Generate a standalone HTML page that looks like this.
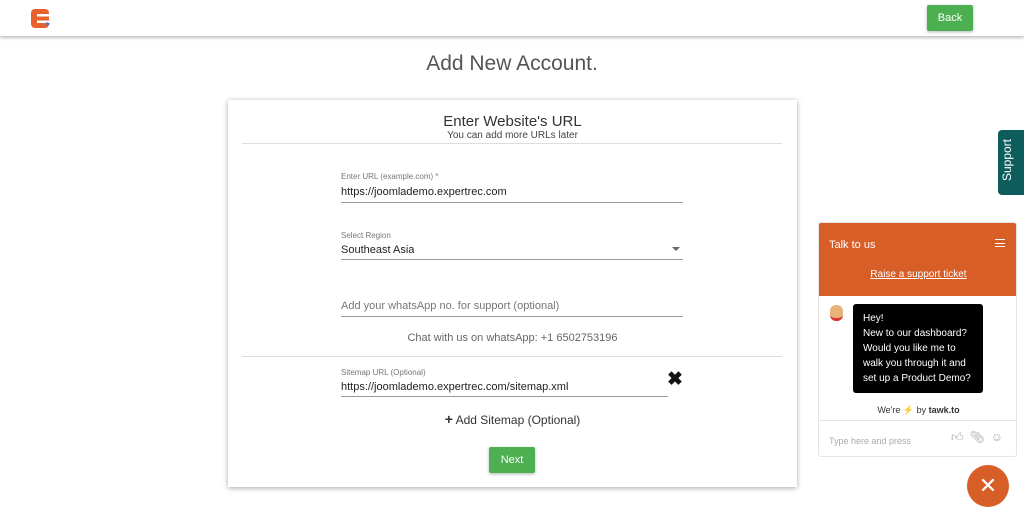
<!DOCTYPE html>
<html><head><style>
*{margin:0;padding:0;box-sizing:border-box}
body{width:1024px;height:521px;overflow:hidden;background:#fff;font-family:"Liberation Sans",sans-serif;position:relative;color:#333}
.top{position:absolute;left:0;top:0;width:1024px;height:36px;background:#fff;box-shadow:0 2px 3px rgba(0,0,0,.25)}
.abs{position:absolute}
.btn{background:#4caf50;color:#fff;font-size:11px;text-align:center;border-radius:2px;box-shadow:0 1px 3px rgba(0,0,0,.3)}
.card{left:228px;top:100px;width:569px;height:387px;box-shadow:0 1px 5px rgba(0,0,0,.35);background:#fff}
.lbl{font-size:8px;color:#777}
.val{font-size:11px;color:#222}
.line{height:1px;background:#999}
</style></head><body>
<div class="top"></div>
<svg class="abs" style="left:30px;top:8px" width="22" height="22" viewBox="0 0 22 22"><rect x="1" y="1" width="18" height="19" rx="4" fill="#e8602c"/><rect x="7" y="6" width="12" height="2.5" fill="#fff"/><rect x="7" y="12.5" width="12" height="2.5" fill="#fff"/><path d="M16 14l4 1.5-3 3.5z" fill="#2b7de9"/></svg>
<div class="abs btn" style="left:927px;top:5px;width:46px;height:26px;line-height:26px">Back</div>
<div class="abs" style="left:0;width:1024px;top:52px;text-align:center;font-size:21px;color:#555">Add New Account.</div>
<div class="abs card">
 <div class="abs" style="left:0;width:569px;top:13px;text-align:center;font-size:15px;color:#333">Enter Website's URL</div>
 <div class="abs" style="left:0;width:569px;top:30px;text-align:center;font-size:10px;color:#444">You can add more URLs later</div>
 <div class="abs line" style="left:14px;width:540px;top:43px;background:#ddd"></div>
 <div class="abs lbl" style="left:113px;top:72px">Enter URL (example.com) *</div>
 <div class="abs val" style="left:113px;top:86px">https://joomlademo.expertrec.com</div>
 <div class="abs line" style="left:113px;width:342px;top:102px"></div>
 <div class="abs lbl" style="left:113px;top:131px">Select Region</div>
 <div class="abs val" style="left:113px;top:144px">Southeast Asia</div>
 <div class="abs" style="left:444px;top:147px;width:0;height:0;border-left:4px solid transparent;border-right:4px solid transparent;border-top:4px solid #666"></div>
 <div class="abs line" style="left:113px;width:342px;top:159px"></div>
 <div class="abs val" style="left:113px;top:200px;color:#777">Add your whatsApp no. for support (optional)</div>
 <div class="abs line" style="left:113px;width:342px;top:216px"></div>
 <div class="abs" style="left:0;width:569px;top:232px;text-align:center;font-size:11px;color:#666">Chat with us on whatsApp: +1 6502753196</div>
 <div class="abs line" style="left:14px;width:540px;top:256px;background:#ddd"></div>
 <div class="abs lbl" style="left:113px;top:268px">Sitemap URL (Optional)</div>
 <div class="abs val" style="left:113px;top:281px">https://joomlademo.expertrec.com/sitemap.xml</div>
 <div class="abs line" style="left:113px;width:327px;top:296px"></div>
 <div class="abs" style="left:439px;top:268px;font-size:19px;font-weight:bold;color:#111">✖</div>
 <div class="abs" style="left:0;width:569px;top:311px;text-align:center;font-size:12px;color:#333"><b style="font-size:14px">+</b> Add Sitemap (Optional)</div>
 <div class="abs btn" style="left:261px;top:347px;width:46px;height:26px;line-height:26px">Next</div>
</div>
<div class="abs" style="left:998px;top:130px;width:26px;height:65px;background:#0e5d5d;border-radius:4px 0 0 4px"></div>
<div class="abs" style="left:1000px;top:185px;transform:rotate(-90deg);transform-origin:0 0;color:#fff;font-size:12px;width:50px;text-align:center">Support</div>
<div class="abs" style="left:818px;top:222px;width:199px;height:235px;border:1px solid #e5e5e5;border-radius:3px;background:#fff;overflow:hidden">
 <div style="height:73px;background:#d75e27;position:relative;color:#fff">
  <div class="abs" style="left:10px;top:16px;font-size:11px">Talk to us</div>
  <div class="abs" style="left:176px;top:16px;width:10px;height:8px;border-top:1.5px solid #fff;border-bottom:1.5px solid #fff"></div>
  <div class="abs" style="left:176px;top:19.5px;width:10px;height:1.5px;background:#fff"></div>
  <div class="abs" style="left:0;width:199px;top:46px;text-align:center;font-size:10px;text-decoration:underline">Raise a support ticket</div>
 </div>
 <div class="abs" style="left:11px;top:82px;width:13px;height:16px;border-radius:6px;background:#e8b27a;border-bottom:3px solid #d33"></div>
 <div class="abs" style="left:34px;top:81px;width:130px;height:89px;background:#000;border-radius:3px;color:#fff;font-size:10px;line-height:15px;padding:7px 10px">Hey!<br>New to our dashboard? Would you like me to walk you through it and set up a Product Demo?</div>
 <div class="abs" style="left:0;width:199px;top:182px;text-align:center;font-size:9px;color:#333">We're <span style="color:#f5b800">⚡</span> by <b>tawk.to</b></div>
 <div class="abs" style="left:0;width:199px;top:197px;height:1px;background:#e5e5e5"></div>
 <div class="abs" style="left:10px;top:213px;font-size:9px;color:#aaa">Type here and press</div>
 <div class="abs" style="left:132px;top:207px;font-size:12px;color:#aaa;letter-spacing:6px">👍︎📎︎☺</div>
</div>
<div class="abs" style="left:967px;top:465px;width:42px;height:42px;border-radius:50%;background:#d75e27;color:#fff;font-size:22px;text-align:center;line-height:42px">✕</div>
</body></html>
